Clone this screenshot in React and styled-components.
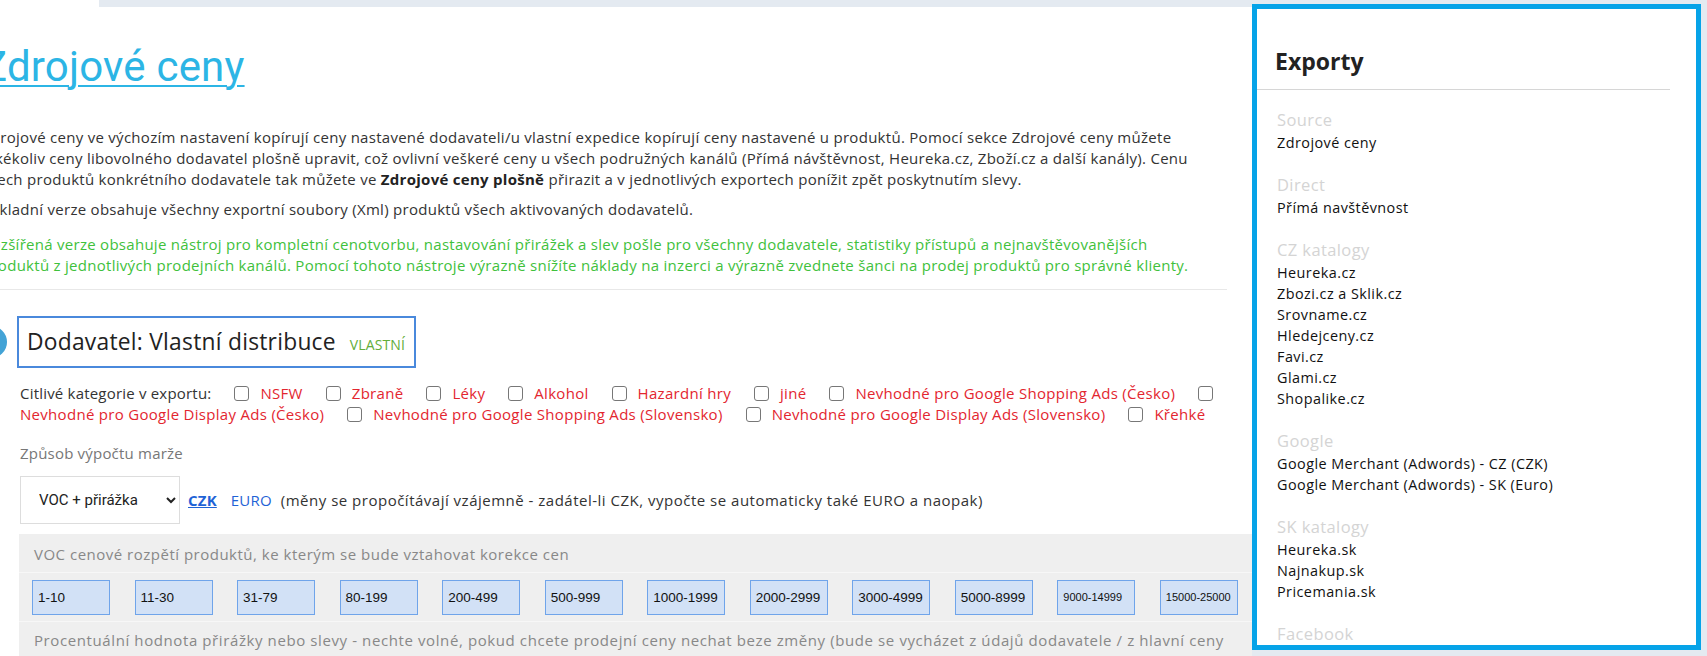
import React from 'react';
import styled, { createGlobalStyle } from 'styled-components';

const Global = createGlobalStyle`
  html, body { margin: 0; padding: 0; background: #fff; }
  body {
    width: 1707px; height: 656px; overflow: hidden;
    font-family: "Open Sans", "Liberation Sans", sans-serif;
    color: #333;
  }
  * { box-sizing: border-box; }
`;

const Page = styled.div`
  display: flex;
  width: 1707px;
  height: 656px;
  overflow: hidden;
  background: #fff;
`;

const Main = styled.main`
  flex: none;
  width: 1252px;
  height: 656px;
`;

const TopStrip = styled.div`
  height: 7px;
  margin-left: 99px;
  background: #e4eaf1;
`;

const Column = styled.div`
  margin-left: -18px;
  width: 1270px;
`;

const Title = styled.h1`
  margin: 36px 0 0;
  font: 400 42px/48px Roboto, "Liberation Sans", sans-serif;
  letter-spacing: 0.2px;
  a {
    color: #2cb5e5;
    text-decoration: underline;
    text-decoration-thickness: 2px;
    text-underline-offset: 4px;
  }
`;

const Intro = styled.div`
  margin-top: 36px;
  padding-right: 50px;
  font-size: 15px;
  line-height: 21px;
  letter-spacing: 0.28px;
`;

const Para = styled.p`
  margin: ${p => p.$gap || 0}px 0 0;
  color: ${p => (p.$green ? '#3fc13c' : '#333')};
  b { color: #222; font-weight: 700; }
`;

const Rule = styled.hr`
  margin: 13px 0 0;
  width: 1245px;
  border: 0;
  border-top: 1px solid #e8e8e8;
`;

const Supplier = styled.section`
  padding-left: 35px;
`;

const SupplierHead = styled.div`
  position: relative;
  margin-top: 26px;
`;

const StepBadge = styled.span`
  position: absolute;
  left: -42px;
  top: 10px;
  width: 32px;
  height: 32px;
  border-radius: 50%;
  background: #43a3d6;
`;

const SupplierBox = styled.div`
  display: inline-flex;
  align-items: baseline;
  gap: 14px;
  height: 52px;
  padding: 9px 9px 0 8px;
  border: 2px solid #4a89dc;
  font-size: 22.8px;
  line-height: 30px;
  letter-spacing: 0.25px;
  color: #222;
`;

const Tag = styled.span`
  font-size: 14px;
  letter-spacing: 0.1px;
  color: #62ad3a;
  text-transform: uppercase;
`;

const Flags = styled.div`
  display: flex;
  flex-wrap: wrap;
  align-items: center;
  margin: 15px 0 0 -8px;
  width: 1218px;
  font-size: 15px;
  line-height: 21px;
  letter-spacing: 0.2px;
`;

const FlagsLabel = styled.span`
  margin-left: 11px;
  color: #333;
  white-space: nowrap;
`;

const Check = styled.span`
  display: inline-block;
  width: 15px;
  height: 15px;
  margin-left: 23px;
  border: 1.5px solid #777;
  border-radius: 3px;
  background: #fff;
`;

const FlagLabel = styled.span`
  margin-left: 11px;
  color: #e3262f;
  white-space: nowrap;
  letter-spacing: 0.3px;
`;

const FieldLabel = styled.div`
  margin: 18px 0 0 3px;
  font-size: 15px;
  line-height: 21px;
  letter-spacing: 0.2px;
  color: #777;
`;

const Controls = styled.div`
  display: flex;
  align-items: center;
  margin: 12px 0 0 3px;
  height: 48px;
  font-size: 15px;
  letter-spacing: 0.5px;
`;

const Select = styled.select`
  width: 160px;
  height: 48px;
  padding: 0 8px 0 14px;
  border: 1px solid #ddd;
  background: #fff;
  font: 400 15px Roboto, "Liberation Sans", sans-serif;
  letter-spacing: 0;
  color: #222;
  outline: none;
`;

const Currency = styled.a`
  margin-left: ${p => p.$ml}px;
  color: #1f63d6;
  letter-spacing: 0.2px;
  font-weight: ${p => (p.$active ? 700 : 400)};
  text-decoration: ${p => (p.$active ? 'underline' : 'none')};
`;

const Note = styled.span`
  margin-left: 9px;
  color: #333;
`;

const Panel = styled.div`
  margin: 10px 0 0 2px;
  width: 1233px;
  background: #efefef;
  font-size: 15px;
  color: #888;
`;

const PanelLabel = styled.div`
  height: 38px;
  padding-left: 15px;
  line-height: 40px;
  letter-spacing: 0.5px;
`;

const RangeRow = styled.div`
  display: flex;
  justify-content: space-between;
  align-items: center;
  height: 50px;
  padding: 0 14px 0 13px;
  border-top: 1px solid #f7f7f7;
  border-bottom: 1px solid #f7f7f7;
`;

const Range = styled.div`
  display: flex;
  align-items: center;
  width: 78px;
  height: 35px;
  padding-left: 5px;
  border: 1px solid #6fa4ea;
  background: #d2e1f6;
  font: 400 ${p => (p.$small ? 11 : 13.5)}px "Liberation Sans", Arial, sans-serif;
  color: #111;
`;

const PanelText = styled.div`
  padding: 8px 25px 0 15px;
  line-height: 21px;
  letter-spacing: 0.6px;
`;

const Aside = styled.aside`
  flex: none;
  width: 455px;
  height: 656px;
  padding: 4px 6px 0 0;
  background: #e4eaf1;
`;

const SidePanel = styled.div`
  height: 646px;
  background: #fff;
  border: 5px solid #06a3e8;
  overflow: hidden;
`;

const SideTitle = styled.h2`
  margin: 0 26px 0 0;
  padding: 37px 0 13px 18px;
  border-bottom: 1px solid #d6d6d6;
  font: 700 23px/30px "Open Sans", sans-serif;
  color: #222;
`;

const Groups = styled.div`
  padding: 17px 0 0 20px;
`;

const Group = styled.div`
  margin-bottom: 19px;
`;

const GroupLabel = styled.div`
  font-size: 16.5px;
  line-height: 25px;
  letter-spacing: 0.4px;
  color: #d4d4d4;
`;

const Item = styled.div`
  font-size: 14.4px;
  line-height: 21px;
  letter-spacing: 0.45px;
  color: #111;
`;

const flags = [
  'NSFW',
  'Zbraně',
  'Léky',
  'Alkohol',
  'Hazardní hry',
  'jiné',
  'Nevhodné pro Google Shopping Ads (Česko)',
  'Nevhodné pro Google Display Ads (Česko)',
  'Nevhodné pro Google Shopping Ads (Slovensko)',
  'Nevhodné pro Google Display Ads (Slovensko)',
  'Křehké',
];

const ranges = [
  '1-10', '11-30', '31-79', '80-199', '200-499', '500-999', '1000-1999',
  '2000-2999', '3000-4999', '5000-8999', '9000-14999', '15000-25000',
];

const exportGroups = [
  { label: 'Source', items: ['Zdrojové ceny'] },
  { label: 'Direct', items: ['Přímá navštěvnost'] },
  {
    label: 'CZ katalogy',
    items: ['Heureka.cz', 'Zbozi.cz a Sklik.cz', 'Srovname.cz', 'Hledejceny.cz', 'Favi.cz', 'Glami.cz', 'Shopalike.cz'],
  },
  {
    label: 'Google',
    items: ['Google Merchant (Adwords) - CZ (CZK)', 'Google Merchant (Adwords) - SK (Euro)'],
  },
  { label: 'SK katalogy', items: ['Heureka.sk', 'Najnakup.sk', 'Pricemania.sk'] },
  { label: 'Facebook', items: ['Facebook.cz', 'Facebook.sk'] },
];

export default function App() {
  return (
    <>
      <Global />
      <Page>
        <Main>
          <TopStrip />
          <Column>
            <Title>
              <a href="#zdrojove-ceny">Zdrojové ceny</a>
            </Title>
            <Intro>
              <Para>
                Zdrojové ceny ve výchozím nastavení kopírují ceny nastavené dodavateli/u vlastní expedice kopírují ceny nastavené u produktů. Pomocí sekce Zdrojové ceny můžete Jakékoliv ceny libovolného dodavatel plošně upravit, což ovlivní veškeré ceny u všech podružných kanálů (Přímá návštěvnost, Heureka.cz, Zboží.cz a další kanály). Cenu všech produktů konkrétního dodavatele tak můžete ve <b>Zdrojové ceny plošně</b> přirazit a v jednotlivých exportech ponížit zpět poskytnutím slevy.
              </Para>
              <Para $gap={9}>
                Základní verze obsahuje všechny exportní soubory (Xml) produktů všech aktivovaných dodavatelů.
              </Para>
              <Para $gap={14} $green>
                Rozšířená verze obsahuje nástroj pro kompletní cenotvorbu, nastavování přirážek a slev pošle pro všechny dodavatele, statistiky přístupů a nejnavštěvovanějších produktů z jednotlivých prodejních kanálů. Pomocí tohoto nástroje výrazně snížíte náklady na inzerci a výrazně zvednete šanci na prodej produktů pro správné klienty.
              </Para>
            </Intro>
            <Rule />
            <Supplier>
              <SupplierHead>
                <StepBadge />
                <SupplierBox>
                  Dodavatel: Vlastní distribuce
                  <Tag>Vlastní</Tag>
                </SupplierBox>
              </SupplierHead>
              <Flags>
                <FlagsLabel>Citlivé kategorie v exportu:</FlagsLabel>
                {flags.map(f => (
                  <React.Fragment key={f}>
                    <Check />
                    <FlagLabel>{f}</FlagLabel>
                  </React.Fragment>
                ))}
              </Flags>
              <FieldLabel>Způsob výpočtu marže</FieldLabel>
              <Controls>
                <Select defaultValue="voc">
                  <option value="voc">VOC + přirážka</option>
                  <option value="moc">MOC - sleva</option>
                </Select>
                <Currency href="#czk" $ml={8} $active>CZK</Currency>
                <Currency href="#euro" $ml={14}>EURO</Currency>
                <Note>(měny se propočítávají vzájemně - zadátel-li CZK, vypočte se automaticky také EURO a naopak)</Note>
              </Controls>
              <Panel>
                <PanelLabel>VOC cenové rozpětí produktů, ke kterým se bude vztahovat korekce cen</PanelLabel>
                <RangeRow>
                  {ranges.map(r => (
                    <Range key={r} $small={r.length > 9}>{r}</Range>
                  ))}
                </RangeRow>
                <PanelText>
                  Procentuální hodnota přirážky nebo slevy - nechte volné, pokud chcete prodejní ceny nechat beze změny (bude se vycházet z údajů dodavatele / z hlavní ceny produktu)
                </PanelText>
              </Panel>
            </Supplier>
          </Column>
        </Main>
        <Aside>
          <SidePanel>
            <SideTitle>Exporty</SideTitle>
            <Groups>
              {exportGroups.map(g => (
                <Group key={g.label}>
                  <GroupLabel>{g.label}</GroupLabel>
                  {g.items.map(i => (
                    <Item key={i}>{i}</Item>
                  ))}
                </Group>
              ))}
            </Groups>
          </SidePanel>
        </Aside>
      </Page>
    </>
  );
}
